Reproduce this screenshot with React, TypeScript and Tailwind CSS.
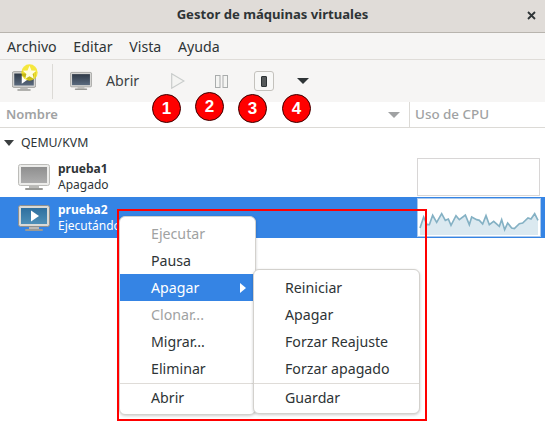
const font = { fontFamily: '"Noto Sans", sans-serif' };

function Monitor({ id, from, to, play, w = 32, bezel = "#dededc", edge = "#aeaeab" }: { id: string; from: string; to: string; play?: boolean; w?: number; bezel?: string; edge?: string }) {
  return (
    <svg width={w} height={w} viewBox="0 0 32 32" className="block">
      <defs>
        <linearGradient id={id} x1="0" y1="0" x2="0" y2="1">
          <stop offset="0" stopColor={from} />
          <stop offset="1" stopColor={to} />
        </linearGradient>
      </defs>
      <rect x="0.5" y="3.5" width="31" height="21" rx="2" fill={bezel} stroke={edge} />
      <rect x="3" y="6" width="26" height="16" fill={`url(#${id})`} />
      {play && <path d="M13 8.5 L21 14 L13 19.5 Z" fill="#fff" />}
      <rect x="11" y="25" width="10" height="2" fill="#b9b9b6" />
      <rect x="7" y="27" width="18" height="2" rx="1" fill="#9a9a96" />
    </svg>
  );
}

function Badge({ n, pos }: { n: number; pos: string }) {
  return (
    <span
      className={`absolute w-[29px] h-[29px] rounded-full bg-[#ff0000] border border-[#3a0000] text-white font-bold text-[17px] flex items-center justify-center leading-none ${pos}`}
      style={{ fontFamily: '"Liberation Sans", sans-serif' }}
    >
      {n}
    </span>
  );
}

function MenuItem({ children, disabled, active, arrow }: { children: string; disabled?: boolean; active?: boolean; arrow?: boolean }) {
  const color = active ? "bg-[#3584e4] text-white" : disabled ? "text-[#a0a2a2]" : "text-[#2e3436]";
  return (
    <div className={`h-[27px] flex items-center justify-between pr-[9px] pl-[31px] text-[14.2px] ${color}`}>
      <span>{children}</span>
      {arrow && <span className="w-0 h-0 border-y-[5px] border-y-transparent border-l-[6px] border-l-white" />}
    </div>
  );
}

const cpu = "442,295 453,262 463,285 470,285 480,257 492,278 507,252 518,272 527,268 535,287 550,258 560,270 578,256 590,285 597,262 612,270 620,272 630,283 640,258 650,285 663,275 680,290 687,270 696,300 705,280 717,295 725,297 740,282 750,280 766,265 775,268 786,252 796,272";

export default function App() {
  return (
    <div className="w-[545px] h-[435px] bg-white overflow-hidden text-[#2e3436] flex flex-col relative" style={font}>
      <div className="h-[33px] shrink-0 bg-[#e0dcd8] border-b border-[#b8b4ae] flex items-center relative pb-[2px]">
        <div className="flex-1 text-center font-bold text-[13.1px] text-[#2e3436]">Gestor de máquinas virtuales</div>
        <svg className="absolute left-[527px] top-[11px]" width="9" height="9" viewBox="0 0 9 9">
          <path d="M1 1 L8 8 M8 1 L1 8" stroke="#2e3436" strokeWidth="1.8" />
        </svg>
      </div>
      <div className="h-[27px] shrink-0 bg-[#f6f5f4] border-b border-[#dfdcd8] flex items-center gap-[16.7px] pl-[7px] pt-[2px] text-[14.2px]">
        <span>Archivo</span>
        <span>Editar</span>
        <span>Vista</span>
        <span>Ayuda</span>
      </div>
      <div className="h-[42px] shrink-0 bg-[#f6f5f4] flex items-center">
        <div className="ml-[12px] w-[24px] h-[24px] relative">
          <Monitor id="a" from="#2f3a48" to="#5a6a7e" play w={24} bezel="#d4d4d2" edge="#8f8f8c" />
          <svg className="absolute left-[9px] top-[-5px]" width="17" height="17" viewBox="0 0 24 24">
            <circle cx="12" cy="12" r="11.5" fill="#f4e200" opacity="0.75" />
            <path d="M12 2.5 L14.8 9 L21.5 9.6 L16.4 14 L18 20.8 L12 17.2 L6 20.8 L7.6 14 L2.5 9.6 L9.2 9 Z" fill="#fffde0" />
          </svg>
        </div>
        <div className="w-px h-[35px] bg-[#dcdad6] ml-[16px]" />
        <div className="ml-[17px]">
          <Monitor id="b" from="#2f3a48" to="#5a6a7e" w={22} bezel="#d4d4d2" edge="#8f8f8c" />
        </div>
        <span className="ml-[14px] w-[33px] text-[14.2px] text-[#3c4143]">Abrir</span>
        <svg className="ml-[32px]" width="14" height="16" viewBox="0 0 14 16">
          <path d="M0.7 0.8 L13 8 L0.7 15.2 Z" fill="#f4f4f2" stroke="#c9cccb" strokeWidth="1.2" />
        </svg>
        <svg className="ml-[30px]" width="13" height="13" viewBox="0 0 13 13">
          <rect x="0.5" y="0.5" width="4.5" height="12" fill="#f4f4f2" stroke="#a9acac" />
          <rect x="8" y="0.5" width="4.5" height="12" fill="#f4f4f2" stroke="#a9acac" />
        </svg>
        <div className="ml-[26px] w-[20px] h-[20px] rounded-[3px] border border-[#c4c2bd] bg-[#f8f8f7] flex items-center justify-center">
          <span className="w-[6px] h-[11px] rounded-[1px] bg-[#55595a] border border-[#2e3436]" />
        </div>
        <span className="ml-[23px] w-0 h-0 border-x-[6px] border-x-transparent border-t-[6px] border-t-[#2e3436]" />
      </div>
      <div className="h-[26px] shrink-0 bg-white border-b border-[#dcdad6] flex items-center relative text-[13px] font-semibold text-[#a0a2a3]">
        <span className="pl-[6px] flex-1">Nombre</span>
        <span className="w-0 h-0 border-x-[6px] border-x-transparent border-t-[6px] border-t-[#a0a2a3] mr-[9px]" />
        <span className="w-[136px] h-full border-l border-[#dcdad6] pl-[5px] flex items-center font-medium text-[13.4px]">Uso de CPU</span>
        <Badge n={1} pos="left-[152px] top-[-8px]" />
        <Badge n={2} pos="left-[195px] top-[-10px]" />
        <Badge n={3} pos="left-[238px] top-[-8px]" />
        <Badge n={4} pos="left-[282px] top-[-8px]" />
      </div>
      <div className="h-[28px] shrink-0 flex items-center pl-[4px] text-[12.3px] gap-[7px] pt-[2px]">
        <span className="w-0 h-0 border-x-[5px] border-x-transparent border-t-[6px] border-t-[#3b3f40]" />
        <span>QEMU/KVM</span>
      </div>
      <div className="h-[41px] shrink-0 flex items-center pl-[18px] relative">
        <Monitor id="c" from="#8f8f8f" to="#adadad" bezel="#ececea" edge="#bcbcb9" />
        <div className="ml-[8px] text-[12px] leading-[16px]">
          <div className="font-bold">prueba1</div>
          <div>Apagado</div>
        </div>
        <div className="absolute left-[417px] top-[2px] w-[123px] h-[38px] border border-[#d8d6d6] bg-white" />
      </div>
      <div className="h-[41px] shrink-0 bg-[#3584e4] flex items-center pl-[18px] relative text-white">
        <Monitor id="d" from="#2f6f9e" to="#4d8fb8" play bezel="#d9d9d6" edge="#8f8f8c" />
        <div className="ml-[8px] text-[12px] leading-[16px]">
          <div className="font-bold">prueba2</div>
          <div>Ejecutándose</div>
        </div>
        <div className="absolute left-[417px] top-[1px] w-[124px] h-[39px] border border-[#a9c8ed] bg-white">
          <svg width="122" height="37" viewBox="436 208 366 111" className="block">
            <polygon points={`${cpu} 796,316 442,316`} fill="#dbe9f0" />
            <polyline points={cpu} fill="none" stroke="#84b1c4" strokeWidth="5" />
          </svg>
        </div>
      </div>

      <div className="absolute left-[119px] top-[216px] w-[137px] h-[199px] bg-white rounded-[6px] border border-[#d3d1cd] shadow-[0_1px_3px_rgba(0,0,0,0.2)] pt-[3px] overflow-hidden">
        <MenuItem disabled>Ejecutar</MenuItem>
        <MenuItem>Pausa</MenuItem>
        <MenuItem active arrow>Apagar</MenuItem>
        <MenuItem disabled>Clonar...</MenuItem>
        <MenuItem>Migrar...</MenuItem>
        <MenuItem>Eliminar</MenuItem>
        <div className="border-t border-[#dfdcd8] mt-px">
          <MenuItem>Abrir</MenuItem>
        </div>
      </div>
      <div className="absolute left-[253px] top-[269px] w-[167px] h-[145px] bg-white rounded-[6px] border border-[#d3d1cd] shadow-[0_1px_3px_rgba(0,0,0,0.2)] pt-[4px]">
        <MenuItem>Reiniciar</MenuItem>
        <MenuItem>Apagar</MenuItem>
        <MenuItem>Forzar Reajuste</MenuItem>
        <MenuItem>Forzar apagado</MenuItem>
        <div className="border-t border-[#dfdcd8] mt-px">
          <MenuItem>Guardar</MenuItem>
        </div>
      </div>
      <div className="absolute left-[117px] top-[209px] w-[310px] h-[212px] border-2 border-[#ff0000] pointer-events-none" />
    </div>
  );
}
